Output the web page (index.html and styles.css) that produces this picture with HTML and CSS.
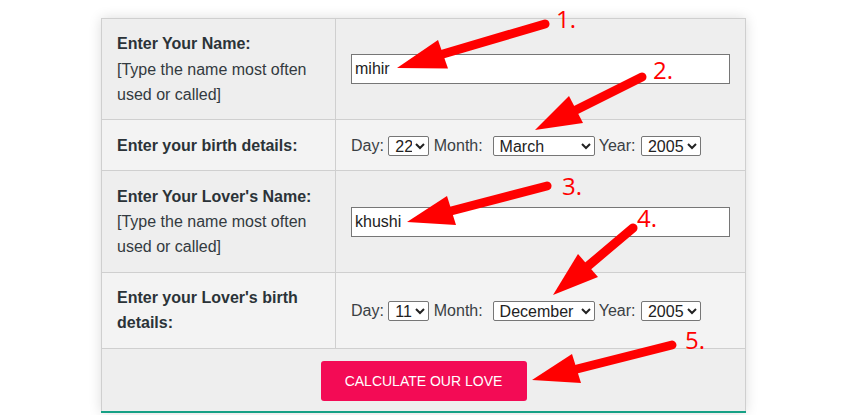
FILE: index.html
```html
<!DOCTYPE html>
<html lang="en">
<head>
<meta charset="utf-8">
<title>Love Calculator</title>
<link rel="stylesheet" href="styles.css">
</head>
<body>
<div class="page">
  <table class="love-form">
    <tr class="row-a">
      <td class="label"><b>Enter Your Name:</b><br>[Type the name most often used or called]</td>
      <td class="field"><input class="name-input" type="text" value="mihir"></td>
    </tr>
    <tr class="row-b">
      <td class="label"><b>Enter your birth details:</b></td>
      <td class="field">Day: <select class="sel-day"><option>22</option></select> Month: &nbsp;<select class="sel-month"><option>March</option></select> Year: <select class="sel-year"><option>2005</option></select></td>
    </tr>
    <tr class="row-a">
      <td class="label"><b>Enter Your Lover's Name:</b><br>[Type the name most often used or called]</td>
      <td class="field"><input class="name-input" type="text" value="khushi"></td>
    </tr>
    <tr class="row-b">
      <td class="label"><b>Enter your Lover's birth details:</b></td>
      <td class="field">Day: <select class="sel-day"><option>11</option></select> Month: &nbsp;<select class="sel-month"><option>December</option></select> Year: <select class="sel-year"><option>2005</option></select></td>
    </tr>
    <tr class="row-a">
      <td class="submit" colspan="2"><button class="calc-btn" type="button">CALCULATE OUR LOVE</button></td>
    </tr>
  </table>

  <svg class="overlay" width="848" height="415" viewBox="0 0 848 415" xmlns="http://www.w3.org/2000/svg">
    <g stroke="#ff0000" stroke-width="9" stroke-linecap="round" fill="none">
      <line x1="545" y1="24" x2="443" y2="54"/>
      <line x1="642" y1="77" x2="576" y2="110"/>
      <line x1="547" y1="186" x2="451" y2="211"/>
      <line x1="633" y1="228" x2="588" y2="266"/>
      <line x1="672" y1="345" x2="577" y2="369"/>
    </g>
    <g fill="#ff0000">
      <polygon points="397,68 448,68.5 438,40"/>
      <polygon points="535,130 583,123 569,96"/>
      <polygon points="407,222 456,225 447,196"/>
      <polygon points="553,295 598,277 578,254"/>
      <polygon points="532,380 581,383 572,354"/>
    </g>
    <g class="nums" fill="#ff0000">
      <text x="556" y="28">1.</text>
      <text x="653" y="79">2.</text>
      <text x="562" y="195">3.</text>
      <text x="637" y="227">4.</text>
      <text x="685" y="349">5.</text>
    </g>
  </svg>
</div>
</body>
</html>
```

FILE: styles.css
```css
html, body {
  margin: 0;
  padding: 0;
  background: #ffffff;
}

.page {
  position: relative;
  width: 848px;
  height: 415px;
  overflow: hidden;
  font-family: "Liberation Sans", Arial, sans-serif;
  color: #333333;
}

.love-form {
  width: 645px;
  margin: 18px 0 0 101px;
  border-collapse: collapse;
  box-shadow: 0 0 12px rgba(0, 0, 0, 0.14);
  font-size: 16px;
  line-height: 25.3px;
}

.love-form td {
  border: 1px solid #cfcfcf;
  padding: 12.3px 15px;
  vertical-align: middle;
}

.row-a td {
  background: #eeeeee;
}

.row-b td {
  background: #f3f3f3;
}

.label {
  width: 203px;
  color: #333a40;
}

.label b {
  color: #2b3338;
}

.field {
  color: #3a3f44;
}

.name-input {
  display: block;
  box-sizing: border-box;
  width: 379px;
  height: 30px;
  margin: 0;
  padding: 0 3px;
  border: 1px solid #767676;
  background: #ffffff;
  font-family: "Liberation Sans", Arial, sans-serif;
  font-size: 16px;
  color: #222;
}

select {
  box-sizing: border-box;
  height: 20px;
  margin: 0;
  padding: 0 0 0 2px;
  border: 1px solid #767676;
  border-radius: 2px;
  background: #ffffff;
  font-family: "Liberation Sans", Arial, sans-serif;
  font-size: 16px;
  color: #222;
  vertical-align: -1px;
}

.sel-day {
  width: 41px;
}

.sel-month {
  width: 102px;
  margin-left: 1px;
}

.sel-year {
  width: 60px;
  margin-left: 1px;
}

.submit {
  text-align: center;
  padding: 12px 0 10px !important;
  border-bottom: 2px solid #16a085 !important;
}

.calc-btn {
  display: inline-block;
  width: 206px;
  height: 40px;
  border: none;
  border-radius: 3px;
  background: #f30b55;
  color: #ffffff;
  font-family: "Liberation Sans", Arial, sans-serif;
  font-size: 14px;
  vertical-align: top;
}

.overlay {
  position: absolute;
  top: 0;
  left: 0;
  pointer-events: none;
}

.nums text {
  font-family: "Open Sans", "Liberation Sans", sans-serif;
  font-size: 24px;
}
```
